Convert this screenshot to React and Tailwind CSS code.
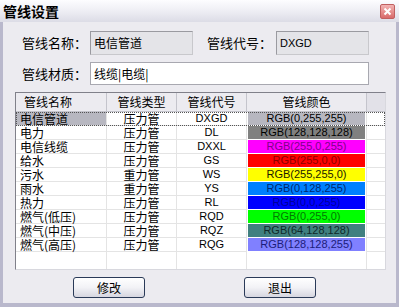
const rows = [
  { name: "电信管道", type: "压力管", code: "DXGD", rgb: "RGB(0,255,255)", bg: "#b7b7c0", fg: "#000000", sel: true },
  { name: "电力", type: "压力管", code: "DL", rgb: "RGB(128,128,128)", bg: "#808080", fg: "#000000" },
  { name: "电信线缆", type: "压力管", code: "DXXL", rgb: "RGB(255,0,255)", bg: "#ff00ff", fg: "#80008a" },
  { name: "给水", type: "压力管", code: "GS", rgb: "RGB(255,0,0)", bg: "#ff0000", fg: "#8a0000" },
  { name: "污水", type: "重力管", code: "WS", rgb: "RGB(255,255,0)", bg: "#ffff00", fg: "#1a1a00" },
  { name: "雨水", type: "重力管", code: "YS", rgb: "RGB(0,128,255)", bg: "#0080ff", fg: "#00266e" },
  { name: "热力", type: "压力管", code: "RL", rgb: "RGB(0,0,255)", bg: "#0000ff", fg: "#00009a" },
  { name: "燃气(低压)", type: "压力管", code: "RQD", rgb: "RGB(0,255,0)", bg: "#00ff00", fg: "#007a00" },
  { name: "燃气(中压)", type: "压力管", code: "RQZ", rgb: "RGB(64,128,128)", bg: "#408080", fg: "#102828" },
  { name: "燃气(高压)", type: "压力管", code: "RQG", rgb: "RGB(128,128,255)", bg: "#8080ff", fg: "#1c1c7a" },
];

const cjk = { fontFamily: '"Noto Sans CJK SC", "Liberation Sans", sans-serif' };
const latin = { fontFamily: '"Liberation Sans", "Noto Sans CJK SC", sans-serif' };

const Cell = ({ children, className = "" }) => (
  <div className={"h-[14px] border-r border-b border-[#e4e4e4] flex items-center leading-none " + className}>{children}</div>
);

const Btn = ({ label }) => (
  <button className="w-[72px] h-[21px] rounded-[3px] border border-[#2a3a58] bg-gradient-to-b from-[#ffffff] via-[#f2f2f6] to-[#d6d6e0] text-[12px] text-black flex items-center justify-center" style={cjk}>
    {label}
  </button>
);

export default function App() {
  return (
    <div className="w-[399px] h-[307px] bg-[#b9b8cc] flex flex-col overflow-hidden" style={cjk}>
      <div className="h-[22px] shrink-0 bg-gradient-to-b from-[#fdfdff] via-[#eeeef4] to-[#dcdce6] flex items-center justify-between pl-[3px] pr-[4px]">
        <span className="text-[14px] font-bold text-black leading-none">管线设置</span>
        <div className="w-[15px] h-[15px] rounded-[2px] bg-gradient-to-b from-[#f2b4b4] to-[#d86a6a] border border-[#c06060] flex items-center justify-center">
          <svg width="9" height="9" viewBox="0 0 9 9">
            <path d="M1.5 1.5 L7.5 7.5 M7.5 1.5 L1.5 7.5" stroke="#ffffff" strokeWidth="2" />
          </svg>
        </div>
      </div>
      <div className="flex-1 mx-[3px] mb-[4px] bg-[#ecebf0] flex flex-col pt-[9px] px-[12px]">
        <div className="flex items-center h-[24px]">
          <span className="w-[75px] pl-[7px] text-[13px] text-black">管线名称：</span>
          <div className="w-[103px] h-[24px] bg-[#e4e4e8] border border-t-[#9a9aa0] border-l-[#9a9aa0] border-r-[#c8c8cc] border-b-[#c8c8cc] flex items-center pl-[3px] text-[12px] text-black">电信管道</div>
          <span className="ml-[14px] w-[69px] text-[13px] text-black">管线代号：</span>
          <div className="w-[93px] h-[24px] bg-[#e4e4e8] border border-t-[#9a9aa0] border-l-[#9a9aa0] border-r-[#c8c8cc] border-b-[#c8c8cc] flex items-center pl-[3px] text-[11px] text-black" style={latin}>DXGD</div>
        </div>
        <div className="flex items-center h-[23px] mt-[7px]">
          <span className="w-[75px] pl-[7px] text-[13px] text-black">管线材质：</span>
          <div className="w-[279px] h-[23px] bg-white border border-[#a8a8b0] flex items-center pl-[3px] text-[12px] text-black">线缆|电缆|</div>
        </div>
        <div className="mt-[7px] w-[371px] h-[178px] border border-t-[#80808a] border-l-[#80808a] border-r-[#d8d8de] border-b-[#d8d8de] bg-white flex flex-col">
          <div className="grid grid-cols-[91px_70px_70px_120px_1fr] h-[19px] bg-[#ecebf0] text-[12px] text-black">
            <div className="border-r border-[#c4c4cc] border-b flex items-center pl-[8px]">管线名称</div>
            <div className="border-r border-[#c4c4cc] border-b flex items-center justify-center">管线类型</div>
            <div className="border-r border-[#c4c4cc] border-b flex items-center justify-center">管线代号</div>
            <div className="border-r border-[#c4c4cc] border-b flex items-center justify-center">管线颜色</div>
            <div className="border-b border-[#c4c4cc] bg-[#e2e1e8]"></div>
          </div>
          {rows.map((r) => (
            <div key={r.code} className={"grid grid-cols-[91px_70px_70px_120px_1fr] text-[12px] text-black " + (r.sel ? "outline outline-1 outline-dotted outline-[#555] -outline-offset-1" : "")}>
              <Cell className={"pl-[4px] " + (r.sel ? "bg-[#b7b7c0]" : "")}>{r.name}</Cell>
              <Cell className="justify-center">{r.type}</Cell>
              <Cell className="justify-center text-[11px]"><span style={latin}>{r.code}</span></Cell>
              <div className="h-[14px] border-r border-[#e4e4e4] bg-white px-[1px] pb-[1px]">
                <div className="h-[13px] flex items-center justify-center text-[11px] leading-none" style={{ ...latin, backgroundColor: r.bg, color: r.fg }}>
                  {r.rgb}
                </div>
              </div>
              <div className="h-[14px] border-b border-[#e4e4e4]"></div>
            </div>
          ))}
          <div className="flex-1 grid grid-cols-[91px_70px_70px_120px_1fr]">
            <div className="border-r border-[#e4e4e4]"></div>
            <div className="border-r border-[#e4e4e4]"></div>
            <div className="border-r border-[#e4e4e4]"></div>
            <div className="border-r border-[#e4e4e4]"></div>
            <div></div>
          </div>
        </div>
        <div className="flex mt-[7px]">
          <div className="ml-[58px]"><Btn label="修改" /></div>
          <div className="ml-[99px]"><Btn label="退出" /></div>
        </div>
      </div>
    </div>
  );
}
